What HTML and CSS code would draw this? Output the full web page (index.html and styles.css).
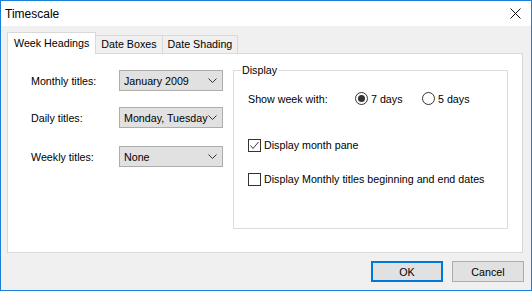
FILE: index.html
```html
<!DOCTYPE html>
<html lang="en">
<head>
    <meta charset="UTF-8">
    <title>Timescale</title>
    <link rel="stylesheet" href="styles.css">
</head>
<body>

<div class="window">
    <div class="titlebar">
        <span class="title">Timescale</span>
        <svg class="close" width="11" height="11" viewBox="0 0 11 11">
            <path d="M0.5 0.5 L10.5 10.5 M10.5 0.5 L0.5 10.5" stroke="#111" stroke-width="1" fill="none"/>
        </svg>
    </div>

    <div class="client">
        <!-- Tabs -->
        <div class="tabs">
            <div class="tab active">Week Headings</div>
            <div class="tab">Date Boxes</div>
            <div class="tab">Date Shading</div>
        </div>

        <div class="panel">
            <div class="titles">
                <div class="row">
                    <label>Monthly titles:</label>
                    <div class="combo"><span>January 2009</span><svg class="arrow" width="9" height="5" viewBox="0 0 9 5"><path d="M0.5 0.5 L4.5 4.5 L8.5 0.5" stroke="#333" fill="none"/></svg></div>
                </div>
                <div class="row">
                    <label>Daily titles:</label>
                    <div class="combo"><span>Monday, Tuesday</span><svg class="arrow" width="9" height="5" viewBox="0 0 9 5"><path d="M0.5 0.5 L4.5 4.5 L8.5 0.5" stroke="#333" fill="none"/></svg></div>
                </div>
                <div class="row">
                    <label>Weekly titles:</label>
                    <div class="combo"><span>None</span><svg class="arrow" width="9" height="5" viewBox="0 0 9 5"><path d="M0.5 0.5 L4.5 4.5 L8.5 0.5" stroke="#333" fill="none"/></svg></div>
                </div>
            </div>

            <fieldset class="group">
                <legend>Display</legend>
                <div class="week">
                    <span class="week-label">Show week with:</span>
                    <span class="radio checked"></span><span class="opt">7 days</span>
                    <span class="radio"></span><span class="opt">5 days</span>
                </div>
                <div class="check-row first">
                    <span class="check">
                        <svg width="11" height="11" viewBox="0 0 11 11"><path d="M1.5 5.5 L4 8.5 L9.5 2" stroke="#333" stroke-width="1" fill="none"/></svg>
                    </span>
                    <span>Display month pane</span>
                </div>
                <div class="check-row">
                    <span class="check"></span>
                    <span>Display Monthly titles beginning and end dates</span>
                </div>
            </fieldset>
        </div>

        <div class="buttons">
            <button class="default">OK</button>
            <button>Cancel</button>
        </div>
    </div>
</div>

</body>
</html>
```

FILE: styles.css
```css
body { margin: 0; font-family: "Liberation Sans", Arial, sans-serif; font-size: 10.7px; color: #000; }
.window { width: 532px; height: 291px; box-sizing: border-box; border: 1px solid #1a7fd6; background: #f0f0f0; display: flex; flex-direction: column; }
.titlebar { height: 25px; background: #fff; display: flex; align-items: center; justify-content: space-between; padding: 0 10px 0 4px; }
.title { font-size: 12px; }
.client { flex: 1; padding: 7px 8px 0 6px; display: flex; flex-direction: column; }

.tabs { display: flex; align-items: flex-end; height: 20px; position: relative; z-index: 1; }
.tab { height: 17px; line-height: 17px; padding: 0 5px; border: 1px solid #d9d9d9; border-bottom: none; border-left: none; background: #f0f0f0; }
.tab.active { height: 21px; line-height: 20px; margin-bottom: -1px; padding: 0 6px; background: #fff; border-left: 1px solid #d9d9d9; }

.panel { height: 200px; box-sizing: border-box; background: #fff; border: 1px solid #d9d9d9; display: flex; padding: 9px 14px 0 23px; }

.titles { width: 192px; flex: none; padding-top: 7px; }
.row { display: flex; align-items: center; height: 21px; margin-bottom: 16px; }
.row:nth-child(2) { margin-bottom: 18px; }
.row label { width: 88px; flex: none; }
.combo { width: 104px; height: 21px; box-sizing: border-box; border: 1px solid #adadad; background: #e1e1e1; display: flex; align-items: center; justify-content: space-between; padding: 0 5px 0 4px; overflow: hidden; white-space: nowrap; }
.combo span { overflow: hidden; width: 84px; }
.arrow { flex: none; }

.group { flex: 1; margin: 0 0 0 10px; height: 166px; border: 1px solid #dcdcdc; padding: 0 0 0 14px; box-sizing: border-box; }
.group legend { padding: 0 1px; margin-left: -7px; line-height: 14px; }
.week { display: flex; align-items: center; height: 21px; margin-top: 11px; }
.week-label { width: 107px; }
.radio { width: 11px; height: 11px; border: 1px solid #333; border-radius: 50%; position: relative; margin-right: 3px; }
.radio.checked::after { content: ""; position: absolute; left: 2px; top: 2px; width: 7px; height: 7px; border-radius: 50%; background: #333; }
.opt { width: 51px; }

.check-row { display: flex; align-items: center; height: 14px; margin-top: 20px; }
.check-row.first { margin-top: 29px; }
.check { width: 11px; height: 11px; border: 1px solid #333; margin-right: 3px; display: flex; }

.buttons { display: flex; justify-content: flex-end; gap: 9px; padding-top: 8px; margin-right: -1px; }
button { width: 72px; height: 21px; font: inherit; background: #e1e1e1; border: 1px solid #adadad; padding: 0; color: #000; }
button.default { border: 2px solid #0078d7; }
```
